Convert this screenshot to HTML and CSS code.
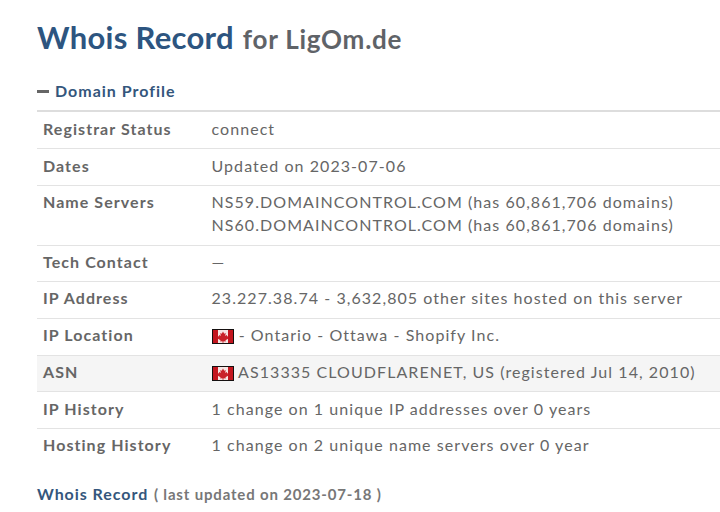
FILE: index.html
```html
<!DOCTYPE html>
<html lang="en">
<head>
<meta charset="utf-8">
<title>Whois Record for LigOm.de</title>
<link rel="stylesheet" href="styles.css">
</head>
<body>
<main class="page">
  <h1 class="title"><span class="title-main">Whois Record</span> <span class="title-sub">for LigOm.de</span></h1>
  <h2 class="section"><span class="dash"></span>Domain Profile</h2>
  <div class="table">
    <div class="row"><div class="label">Registrar Status</div><div class="value">connect</div></div>
    <div class="row"><div class="label">Dates</div><div class="value">Updated on 2023-07-06</div></div>
    <div class="row"><div class="label">Name Servers</div><div class="value">NS59.DOMAINCONTROL.COM (has 60,861,706 domains)<br>NS60.DOMAINCONTROL.COM (has 60,861,706 domains)</div></div>
    <div class="row"><div class="label">Tech Contact</div><div class="value">—</div></div>
    <div class="row"><div class="label">IP Address</div><div class="value">23.227.38.74 - 3,632,805 other sites hosted on this server</div></div>
    <div class="row"><div class="label">IP Location</div><div class="value"><svg class="flag" viewBox="0 0 22 15"><rect width="22" height="15" fill="#151010"/><rect x="1" y="1" width="20" height="13" fill="#f6e6e4"/><rect x="1" y="1" width="5" height="13" fill="#c3161f"/><rect x="16" y="1" width="5" height="13" fill="#c3161f"/><path d="M11 2.500l1.200 2.200 1.500-.6-.5 3 1.500-1 .8 1.400 1-.2-.6 1.800.6.500-3 1.700.3 1.200-2.300-.3v1.500h-1v-1.500l-2.300.3.3-1.200-3-1.700.6-.5-.6-1.800 1 .2.800-1.400 1.500 1-.5-3 1.500.6z" fill="#c9222a"/></svg> - Ontario - Ottawa - Shopify Inc.</div></div>
    <div class="row row-alt"><div class="label">ASN</div><div class="value"><svg class="flag" viewBox="0 0 22 15"><rect width="22" height="15" fill="#151010"/><rect x="1" y="1" width="20" height="13" fill="#f6e6e4"/><rect x="1" y="1" width="5" height="13" fill="#c3161f"/><rect x="16" y="1" width="5" height="13" fill="#c3161f"/><path d="M11 2.500l1.200 2.200 1.500-.6-.5 3 1.500-1 .8 1.400 1-.2-.6 1.800.6.500-3 1.700.3 1.200-2.300-.3v1.500h-1v-1.500l-2.300.3.3-1.200-3-1.700.6-.5-.6-1.800 1 .2.800-1.400 1.500 1-.5-3 1.500.6z" fill="#c9222a"/></svg> AS13335 CLOUDFLARENET, US (registered Jul 14, 2010)</div></div>
    <div class="row"><div class="label">IP History</div><div class="value">1 change on 1 unique IP addresses over 0 years</div></div>
    <div class="row"><div class="label">Hosting History</div><div class="value">1 change on 2 unique name servers over 0 year</div></div>
  </div>
  <p class="footer"><strong class="footer-title">Whois Record</strong> <span class="footer-note">( last updated on 2023-07-18 )</span></p>
</main>
</body>
</html>
```
FILE: styles.css
```css
html, body { margin: 0; padding: 0; background: #fff; }
body { font-family: Lato, sans-serif; color: #666; overflow: hidden; height: 512px; }
.page { padding: 0 0 0 37px; }
.title { margin: 0; padding-top: 17px; height: 42px; font-size: 31px; line-height: 40px; font-weight: 700; letter-spacing: 0.3px; }
.title-main { color: #2d5580; }
.title-sub { color: #5f6368; font-size: 26px; letter-spacing: 0.75px; margin-left: 1px; }
.section { display: flex; align-items: center; margin: 22px 0 0; height: 20px; font-size: 16px; line-height: 20px; font-weight: 700; color: #34567c; letter-spacing: 1px; }
.dash { width: 12px; height: 3px; background: #666; margin-right: 6px; }
.table { margin-top: 9px; border-top: 2px solid #ddd; padding-top: 0.6px; }
.row { display: flex; padding: 5.270px 6px 7.573px; border-bottom: 1px solid #e3e3e3; font-size: 16px; line-height: 22.857px; letter-spacing: 1.060px; }
.row:last-child { border-bottom: 0; }
.row-alt { background: #f5f5f5; }
.label { width: 168.500px; flex: none; font-weight: 700; color: #666; }
.value { color: #666; white-space: nowrap; }
.flag { width: 22px; height: 15px; vertical-align: -3px; filter: blur(0.4px); }
.footer { margin: 19px 0 0; font-size: 15px; line-height: 20px; letter-spacing: 0.9px; }
.footer-title { color: #34567c; font-size: 16px; letter-spacing: 0.950px; }
.footer-note { font-weight: 700; color: #777; font-size: 15px; margin-left: 1px; letter-spacing: 0.830px; }
```
